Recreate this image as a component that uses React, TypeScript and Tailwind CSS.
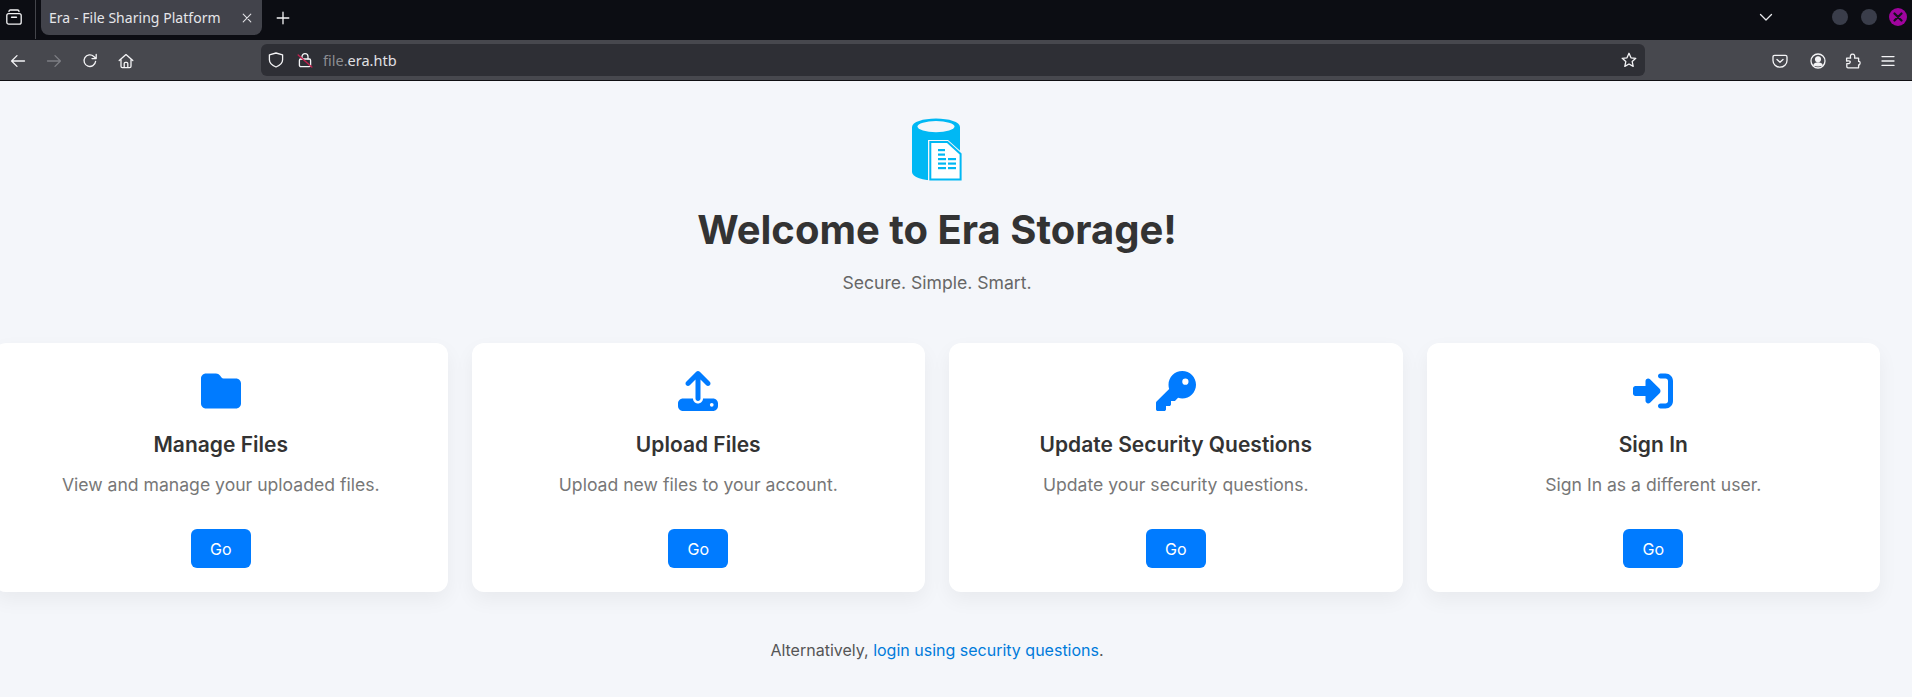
import React from "react";
import { FaFolder, FaUpload, FaKey, FaRightToBracket } from "react-icons/fa6";

const stroke = {
  fill: "none",
  stroke: "currentColor",
  strokeWidth: 1.3,
  strokeLinecap: "round" as const,
  strokeLinejoin: "round" as const,
};

function Ico({ children, className = "text-[#f4f4f6]", size = 16 }: { children: React.ReactNode; className?: string; size?: number }) {
  return (
    <svg width={size} height={size} viewBox="0 0 16 16" className={`shrink-0 ${className}`} {...stroke}>
      {children}
    </svg>
  );
}

function ToolBtn({ children, w = "w-[36px]" }: { children: React.ReactNode; w?: string }) {
  return <div className={`${w} h-full flex items-center justify-center`}>{children}</div>;
}

function TabBar() {
  return (
    <div className="h-[40px] bg-[#0c0d13] flex items-start font-['Noto_Sans',sans-serif] text-[#e6e6ea]">
      <div className="w-[36px] h-[39px] flex items-center border-r border-[#44454b] shrink-0 pb-[5px] pl-[6px]">
        <svg width="16" height="16" viewBox="0 0 16 16" className="text-[#f4f4f6]" {...stroke}>
          <rect x="0.8" y="4.6" width="14.4" height="10.6" rx="2" />
          <path d="M3 2.6 Q3 1 4.5 1 H11.5 Q13 1 13 2.6" />
          <path d="M5.6 8.2 H10.4" strokeWidth="1.6" />
        </svg>
      </div>
      <div className="ml-[5px] w-[221px] h-[35px] bg-[#42434b] rounded-b-[8px] flex items-center pl-[8px] pr-[10px] shrink-0">
        <span className="text-[14px] leading-none tracking-[0.04px] flex-1 whitespace-nowrap">Era - File Sharing Platform</span>
        <svg width="10" height="10" viewBox="0 0 10 10" className="text-[#e0e0e4]" {...stroke}>
          <path d="M1.2 1.2 L8.8 8.8 M8.8 1.2 L1.2 8.8" strokeWidth="1.1" />
        </svg>
      </div>
      <div className="ml-[14px] h-[36px] flex items-center">
        <svg width="14" height="14" viewBox="0 0 14 14" className="text-[#f4f4f6]" {...stroke}>
          <path d="M7 1.2 V12.8 M1.2 7 H12.8" />
        </svg>
      </div>
      <div className="flex-1" />
      <div className="h-[33px] flex items-center mr-[59px]">
        <svg width="14" height="14" viewBox="0 0 14 14" className="text-[#e8e8ec]" {...stroke}>
          <path d="M1.5 4.5 L7 10 L12.5 4.5" />
        </svg>
      </div>
      <div className="h-[33px] flex items-center gap-[13px] pr-[5px]">
        <div className="w-[16px] h-[16px] rounded-full bg-[#3a3d4a]" />
        <div className="w-[16px] h-[16px] mr-[-1px] rounded-full bg-[#3a3d4a]" />
        <div className="w-[18px] h-[18px] rounded-full bg-[#a0049e] flex items-center justify-center">
          <svg width="10" height="10" viewBox="0 0 10 10" className="text-[#12121a]">
            <path d="M1.5 1.5 L8.5 8.5 M8.5 1.5 L1.5 8.5" stroke="currentColor" strokeWidth="2.2" strokeLinecap="round" />
          </svg>
        </div>
      </div>
    </div>
  );
}

function ToolBar() {
  return (
    <div className="h-[41px] bg-[#47484e] border-b border-[#0f0f12] flex items-stretch font-['Noto_Sans',sans-serif]">
      <div className="flex items-center pt-[1px]">
        <ToolBtn>
          <Ico><path d="M14.5 8 H1.8 M7 2.6 L1.6 8 L7 13.4" /></Ico>
        </ToolBtn>
        <ToolBtn>
          <Ico className="text-[#7d7e84]"><path d="M1.5 8 H14.2 M9 2.6 L14.4 8 L9 13.4" /></Ico>
        </ToolBtn>
        <ToolBtn>
          <Ico><path d="M13.6 8.4 A5.8 5.8 0 1 1 11.8 3.4 L14 5.4 M14.2 1.4 V5.6 H10" /></Ico>
        </ToolBtn>
        <ToolBtn w="w-[35px]">
          <Ico><path d="M1.2 7.6 L8 1.6 L14.8 7.6 M3 6.4 V13.2 Q3 14.6 4.4 14.6 H11.6 Q13 14.6 13 13.2 V6.4 M6.2 14.6 V10.6 Q6.2 9.4 7.4 9.4 H8.6 Q9.8 9.4 9.8 10.6 V14.6" /></Ico>
        </ToolBtn>
      </div>
      <div className="ml-[118px] mt-[4px] h-[32px] w-[1384px] bg-[#2e2f35] rounded-[6px] flex items-center shrink-0">
        <div className="ml-[7px]">
          <Ico><path d="M8 1 L14.6 2.8 V7.8 Q14.6 12.4 8 15 Q1.4 12.4 1.4 7.8 V2.8 Z" /></Ico>
        </div>
        <div className="ml-[13px] relative">
          <Ico>
            <rect x="2.4" y="7" width="11.2" height="7.6" rx="1.4" />
            <path d="M5 7 V4.6 A3 3 0 0 1 11 4.6 V7" />
          </Ico>
          <svg width="16" height="16" viewBox="0 0 16 16" className="absolute left-0 top-0">
            <path d="M1.2 3 L14.8 15" stroke="#c2204f" strokeWidth="1.4" strokeLinecap="round" />
          </svg>
        </div>
        <div className="ml-[10px] text-[14.5px] leading-none">
          <span className="text-[#8c8d92]">file.</span>
          <span className="text-[#e0e0e4]">era.htb</span>
        </div>
        <div className="flex-1" />
        <div className="mr-[8px]">
          <Ico><path d="M8 1.3 L10 5.8 L14.8 6.3 L11.2 9.6 L12.2 14.4 L8 12 L3.8 14.4 L4.8 9.6 L1.2 6.3 L6 5.8 Z" /></Ico>
        </div>
      </div>
      <div className="flex-1" />
      <div className="flex items-center pr-[6px] pt-[1px]">
        <ToolBtn w="w-[37px]">
          <div className="mr-[1px]">
            <Ico>
              <path d="M2.6 2.4 H13.4 Q15 2.4 15 4 V7.4 A7 6.8 0 0 1 1 7.4 V4 Q1 2.4 2.6 2.4 Z" />
              <path d="M5 6.4 L8 9.2 L11 6.4" />
            </Ico>
          </div>
        </ToolBtn>
        <ToolBtn w="w-[37px]">
          <Ico>
            <circle cx="8" cy="8" r="7" />
            <circle cx="8" cy="6.2" r="2.4" fill="currentColor" />
            <path d="M3.8 12.2 Q4.8 10 8 10 Q11.2 10 12.2 12.2 Q8 13.4 3.8 12.2 Z" fill="currentColor" />
          </Ico>
        </ToolBtn>
        <ToolBtn w="w-[34px]">
          <Ico>
            <path d="M1.6 5.2 H5.6 Q4.6 1.2 7.6 1.2 Q10.4 1.2 9.6 5.2 H13.6 V8.4 Q15.4 8 15 10.6 Q14.6 12.2 13.6 11.8 V14.8 H3 Q1.8 14.8 1.8 13.6 V10.6 H4 Q5.6 10 5.2 8.4 Q4.6 7.4 1.6 8 Z" />
          </Ico>
        </ToolBtn>
        <ToolBtn w="w-[36px]">
          <Ico><path d="M2 3.6 H14 M2 8 H14 M2 12.4 H14" /></Ico>
        </ToolBtn>
      </div>
    </div>
  );
}

function Logo() {
  return (
    <svg width="52" height="64" viewBox="0 0 52 64" className="block ml-[2px]">
      <path d="M0 9 C0 4 11 0.5 24 0.5 C37 0.5 48 4 48 9 V54 C48 59 37 62.5 24 62.5 C11 62.5 0 59 0 54 Z" fill="#00b8f4" />
      <ellipse cx="24" cy="8.6" rx="18.5" ry="5.6" fill="#f4f6fa" />
      <path d="M16 22 H36 L50.6 35 V63.6 H16 Z" fill="#f4f6fa" />
      <path d="M18.3 24 H35.4 L48.6 36 V61.6 H18.3 Z" fill="#ffffff" stroke="#00b8f4" strokeWidth="2" />
      <g fill="#00b8f4">
        <rect x="26" y="31" width="7" height="2.2" />
        <rect x="26" y="35.5" width="7" height="2.2" />
        <rect x="26" y="40" width="8" height="2.2" />
        <rect x="36" y="40" width="8" height="2.2" />
        <rect x="26" y="44.5" width="8" height="2.2" />
        <rect x="36" y="44.5" width="8" height="2.2" />
        <rect x="26" y="49" width="8" height="2.2" />
        <rect x="36" y="49" width="8" height="2.2" />
      </g>
    </svg>
  );
}

const cards = [
  { title: "Manage Files", desc: "View and manage your uploaded files.", Icon: FaFolder },
  { title: "Upload Files", desc: "Upload new files to your account.", Icon: FaUpload },
  { title: "Update Security Questions", desc: "Update your security questions.", Icon: FaKey },
  { title: "Sign In", desc: "Sign In as a different user.", Icon: FaRightToBracket },
];

function Card({ title, desc, Icon }: (typeof cards)[number]) {
  return (
    <div className="w-[453.5px] h-[249px] shrink-0 bg-white rounded-[12px] shadow-[0_8px_20px_rgba(0,0,0,0.05)] flex flex-col items-center pt-[28px]">
      <Icon className="text-[40px] text-[#007bff]" />
      <h3 className="mt-[21px] text-[21px] leading-[25px] font-semibold text-[#333333]">{title}</h3>
      <p className="mt-[15px] text-[17.6px] leading-[26px] text-[#777777]">{desc}</p>
      <button className="mt-[31px] w-[60px] h-[39px] rounded-[6px] bg-[#007bff] text-white text-[16px]">Go</button>
    </div>
  );
}

export default function App() {
  return (
    <div className="w-[1912px] h-[697px] overflow-hidden bg-[#f4f6fa] font-['Inter',sans-serif]">
      <TabBar />
      <ToolBar />
      <main className="w-[1874px] flex flex-col items-center pt-[37px]">
        <Logo />
        <h1 className="mt-[24px] text-[40px] leading-[48px] font-bold text-[#333333]">Welcome to Era Storage!</h1>
        <p className="mt-[16px] text-[17.6px] leading-[26px] text-[#666666]">Secure. Simple. Smart.</p>
        <div className="mt-[47px] w-full flex justify-center gap-[24px]">
          {cards.map((c) => (
            <Card key={c.title} {...c} />
          ))}
        </div>
        <p className="mt-[46px] text-[16px] leading-[24px] text-[#555555]">
          Alternatively, <a className="text-[#007bdb]">login using security questions</a>.
        </p>
      </main>
    </div>
  );
}
